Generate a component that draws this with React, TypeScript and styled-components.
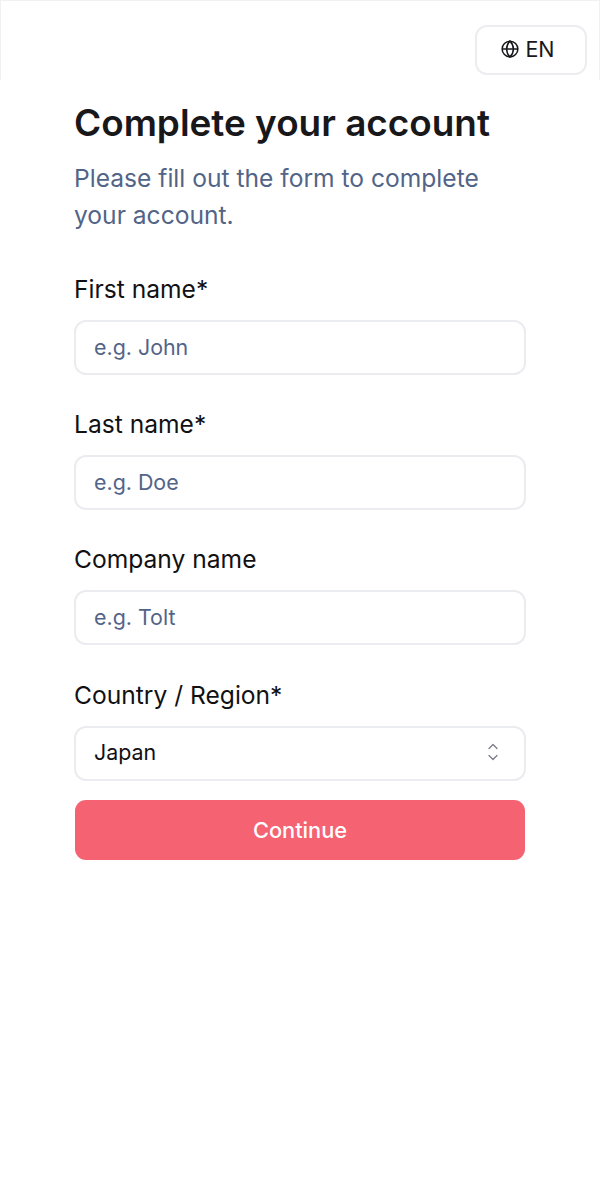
import React from "react";
import styled, { createGlobalStyle } from "styled-components";

const GlobalStyle = createGlobalStyle`
  html, body {
    margin: 0;
    background: #ffffff;
    font-family: "Inter", "Liberation Sans", sans-serif;
  }
`;

const Page = styled.div`
  display: flex;
  flex-direction: column;
  min-height: 1200px;
  background: #ffffff;
`;

const Header = styled.header`
  display: flex;
  justify-content: flex-end;
  align-items: flex-start;
  box-sizing: border-box;
  height: 80px;
  padding: 24px 12px 0 0;
  border: 1px solid #f1f1f2;
  border-bottom: none;
`;

const LangButton = styled.button`
  display: flex;
  align-items: center;
  justify-content: center;
  gap: 6px;
  box-sizing: border-box;
  width: 112px;
  height: 50px;
  padding: 0 6px 2px 0;
  background: #ffffff;
  border: 2px solid #ecedf0;
  border-radius: 12px;
  color: #18181b;
  font-family: inherit;
  font-size: 21.500px;
  font-weight: 400;
`;

const Main = styled.main`
  display: flex;
  flex-direction: column;
  width: 452px;
  margin-left: 74px;
`;

const Title = styled.h1`
  margin: 19px 0 0;
  color: #18181b;
  font-size: 36.900px;
  line-height: 48px;
  font-weight: 600;
`;

const Subtitle = styled.p`
  margin: 13px 0 0;
  color: #526487;
  font-size: 24.600px;
  line-height: 37px;
  font-weight: 400;
`;

const Form = styled.form`
  display: flex;
  flex-direction: column;
  gap: 19px;
  margin-top: 38px;
`;

const Fields = styled.div`
  display: flex;
  flex-direction: column;
  gap: 32.200px;
`;

const Field = styled.div`
  display: flex;
  flex-direction: column;
  gap: 16px;
`;

const Label = styled.label`
  color: #111114;
  font-size: 24.600px;
  line-height: 34px;
  font-weight: 400;
  height: 32px;
`;

const Input = styled.input`
  box-sizing: border-box;
  width: 100%;
  height: 55px;
  padding: 0 18px 2px;
  background: #ffffff;
  border: 2px solid #ebecef;
  border-radius: 12px;
  outline: none;
  font-family: inherit;
  font-size: 21.400px;
  color: #111114;

  &::placeholder {
    color: #526487;
    opacity: 1;
  }
`;

const SelectBox = styled.div`
  display: flex;
  align-items: center;
  justify-content: space-between;
  box-sizing: border-box;
  height: 55px;
  padding: 0 25px 2px 18px;
  background: #ffffff;
  border: 2px solid #ebecef;
  border-radius: 12px;
  font-size: 21.400px;
  color: #111114;
`;

const ContinueButton = styled.button`
  box-sizing: border-box;
  width: 450px;
  height: 60px;
  margin: 0 0 0 1px;
  padding: 0;
  background: #f56272;
  border: none;
  border-radius: 11px;
  color: #ffffff;
  font-family: inherit;
  font-size: 21.800px;
  font-weight: 500;
`;

const GlobeIcon = () => (
  <svg width="18" height="18" viewBox="0 0 24 24" fill="none" stroke="#18181b" strokeWidth="2">
    <circle cx="12" cy="12" r="10.500" />
    <path d="M1.500 12h21" />
    <path d="M12 1.500c3 3 4.500 6.500 4.500 10.500s-1.500 7.500-4.500 10.500c-3-3-4.500-6.500-4.500-10.500s1.500-7.500 4.500-10.500z" />
  </svg>
);

const ChevronsIcon = () => (
  <svg width="12" height="20" viewBox="0 0 12 20" fill="none" stroke="#7a7e85" strokeWidth="1.300" strokeLinecap="round" strokeLinejoin="round">
    <path d="M2 6.500 6 2.500l4 4" />
    <path d="M2 13.500l4 4 4-4" />
  </svg>
);

const fields = [
  { label: "First name*", placeholder: "e.g. John" },
  { label: "Last name*", placeholder: "e.g. Doe" },
  { label: "Company name", placeholder: "e.g. Tolt" },
];

const App = () => {
  return (
    <Page>
      <GlobalStyle />
      <Header>
        <LangButton type="button">
          <GlobeIcon />
          EN
        </LangButton>
      </Header>
      <Main>
        <Title>Complete your account</Title>
        <Subtitle>Please fill out the form to complete your account.</Subtitle>
        <Form>
          <Fields>
            {fields.map((field) => (
              <Field key={field.label}>
                <Label>{field.label}</Label>
                <Input type="text" placeholder={field.placeholder} />
              </Field>
            ))}
            <Field>
              <Label>Country / Region*</Label>
              <SelectBox>
                Japan
                <ChevronsIcon />
              </SelectBox>
            </Field>
          </Fields>
          <ContinueButton type="button">Continue</ContinueButton>
        </Form>
      </Main>
    </Page>
  );
};

export default App;
